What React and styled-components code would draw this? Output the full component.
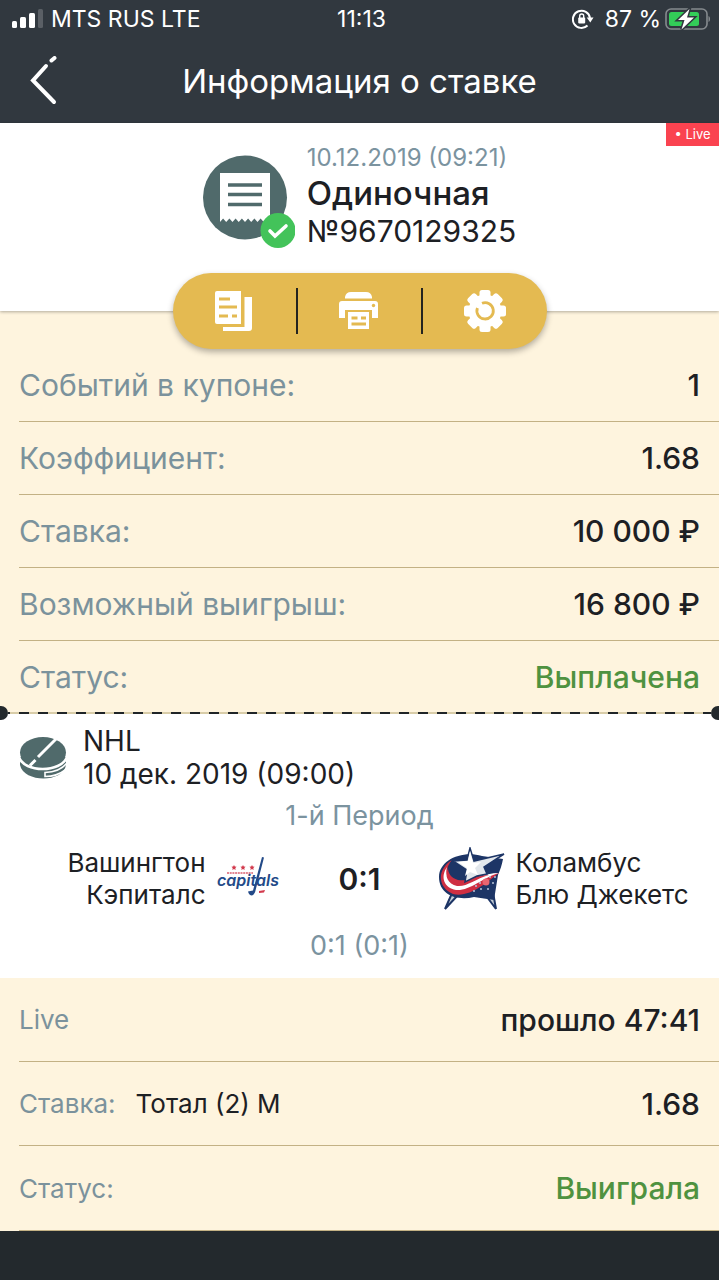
import React from 'react'
import styled, { createGlobalStyle } from 'styled-components'

const GlobalStyle = createGlobalStyle`
  * {
    box-sizing: border-box;
  }
  body {
    margin: 0;
    background: #23292d;
    font-family: Inter, "Open Sans", sans-serif;
    color: #1d2024;
  }
  h1, h2, p, dl, dt, dd {
    margin: 0;
    font-weight: 400;
  }
  button {
    border: 0;
    padding: 0;
    background: none;
    cursor: pointer;
  }
  svg {
    display: block;
    flex-shrink: 0;
  }
`;

const TopBar = styled.header`
  background: #31383f;
  color: white;
`;

const StatusBar = styled.div`
  display: grid;
  grid-template-columns: 1fr auto 1fr;
  align-items: center;
  height: 38px;
  padding: 0 8px 0 12px;
  font-size: 23px;
`;

const StatusGroup = styled.div`
  display: flex;
  align-items: center;
  gap: ${(props) => props.$gap}px;
  justify-content: ${(props) => (props.$end ? 'flex-end' : 'flex-start')};
  white-space: nowrap;
`;

const NavBar = styled.div`
  display: grid;
  grid-template-columns: 88px 1fr 88px;
  align-items: center;
  height: 85px;
`;

const BackButton = styled.button`
  display: flex;
  align-items: center;
  height: 100%;
  padding-left: 28px;
  color: white;
`;

const Title = styled.h1`
  font-size: 33px;
  line-height: 40px;
  text-align: center;
`;

const Summary = styled.section`
  position: relative;
  display: flex;
  flex-direction: column;
  align-items: center;
  background: white;
  box-shadow: 0 1px 3px rgba(0, 0, 0, 0.3);
`;

const LiveBadge = styled.span`
  position: absolute;
  top: 0;
  right: 0;
  width: 53px;
  height: 23px;
  background: #fa4350;
  color: white;
  font-size: 13px;
  line-height: 23px;
  text-align: center;
`;

const Coupon = styled.div`
  display: flex;
  gap: 12px;
  height: 150px;
  padding-top: 20px;
`;

const CouponIcon = styled.div`
  padding-top: 12px;
`;

const CouponDate = styled.p`
  font-size: 24px;
  line-height: 30px;
  color: #7b939f;
`;

const CouponType = styled.h2`
  font-size: 33px;
  font-weight: 500;
  line-height: 40px;
`;

const CouponNumber = styled.p`
  font-size: 30px;
  line-height: 36px;
`;

const Actions = styled.div`
  display: flex;
  align-items: center;
  width: 374px;
  height: 76px;
  margin-bottom: -38px;
  border-radius: 38px;
  background: #e4ba51;
  box-shadow: 0 3px 6px rgba(0, 0, 0, 0.3);
`;

const ActionButton = styled.button`
  flex: 1;
  display: flex;
  justify-content: center;
  color: white;

  & + & {
    border-left: 2px solid #24241f;
  }
`;

const Details = styled.dl`
  padding: ${(props) => props.$top || 0}px 0 0 19px;
  background: #fef4de;
`;

const Row = styled.div`
  display: flex;
  align-items: center;
  justify-content: space-between;
  height: ${(props) => (props.$tall ? 84 : 73)}px;
  padding-right: 19px;
  border-bottom: 1px solid #c3b184;

  &:last-child {
    height: ${(props) => (props.$tall ? 85 : 72)}px;
    border-bottom-width: ${(props) => (props.$tall ? 1 : 0)}px;
  }
`;

const Label = styled.dt`
  font-size: ${(props) => (props.$small ? 26 : 30)}px;
  color: #7b929c;
`;

const Value = styled.dd`
  margin-left: auto;
  font-size: 30px;
  font-weight: 500;
  color: ${(props) => (props.$good ? '#4f9240' : 'inherit')};
`;

const Pick = styled.dd`
  margin-left: 20px;
  font-size: 26px;
`;

const TearLine = styled.div`
  position: relative;
  display: flex;
  align-items: center;
  justify-content: space-between;
  height: 14px;
  margin: -7px 0;
  overflow: hidden;
`;

const TearDot = styled.span`
  width: 14px;
  height: 14px;
  margin: 0 -6px;
  border-radius: 50%;
  background: #23292d;
`;

const TearDashes = styled.span`
  flex: 1;
  height: 2px;
  margin: 0 6px;
  background: repeating-linear-gradient(to right, #1f2427 0 2px, #d9cda8 2px 11px, #1f2427 11px 19px);
`;

const Match = styled.section`
  height: 265px;
  padding-top: 12px;
  background: white;
`;

const League = styled.div`
  display: flex;
  align-items: center;
  gap: 16px;
  padding-left: 19px;
  font-size: 28px;
  line-height: 33px;
`;

const Note = styled.p`
  padding: 8px 0;
  font-size: 27px;
  line-height: 34px;
  text-align: center;
  color: #7b939f;
`;

const Teams = styled.div`
  display: grid;
  grid-template-columns: 1fr 156px 1fr;
  align-items: center;
  height: 80px;
  padding-bottom: 4px;
`;

const Team = styled.div`
  display: flex;
  align-items: center;
  justify-content: ${(props) => (props.$home ? 'flex-end' : 'flex-start')};
  gap: 10px;
  font-size: 26px;
  line-height: 32px;
  text-align: ${(props) => (props.$home ? 'right' : 'left')};
`;

const Score = styled.strong`
  font-size: 30px;
  font-weight: 600;
  text-align: center;
`;

const Signal = () => (
  <svg width="31" height="20" viewBox="0 0 31 20" fill="white" aria-hidden="true">
    <rect x="0" y="12" width="5" height="7" rx="1.5" />
    <rect x="8" y="8" width="6" height="11" rx="1.5" />
    <rect x="17" y="4" width="6" height="15" rx="1.5" />
    <rect x="26" y="0" width="5" height="19" rx="1.5" opacity="0.2" />
  </svg>
);

const RotationLock = () => (
  <svg width="22" height="20" viewBox="0 0 22 20" fill="none" aria-hidden="true">
    <path d="M15.500 16.500A8.600 8.600 0 1 1 18 9" stroke="white" strokeWidth="2" />
    <path d="M14.700 8.500h6.800l-3.200 5z" fill="white" />
    <rect x="6.200" y="8.600" width="7" height="5.800" rx="0.800" fill="white" />
    <path d="M7.700 9V7a2 2 0 0 1 4 0v2" stroke="white" strokeWidth="1.400" />
  </svg>
);

const Battery = () => (
  <svg width="46" height="24" viewBox="0 0 46 24" aria-hidden="true">
    <rect x="1" y="2" width="41" height="20" rx="5" fill="none" stroke="#858a8e" strokeWidth="1.6" />
    <rect x="4" y="5" width="30" height="14" rx="2.5" fill="#33cd58" />
    <path d="M43.5 9c2 .6 2 5.4 0 6z" fill="#858a8e" />
    <path
      d="M24.500 2L13 13h6.500l-3 9.500L29 10.500h-7z"
      fill="white"
      stroke="#31383f"
      strokeWidth="3"
      paintOrder="stroke"
    />
  </svg>
);

const BackArrow = () => (
  <svg width="30" height="50" viewBox="0 0 30 50" fill="none" stroke="currentColor" strokeWidth="4" strokeLinecap="round">
    <path d="M26 46L5 24.500 18 10" />
    <path d="M23.500 4.500L26.500 2" />
  </svg>
);

const CouponBadge = () => (
  <svg width="92" height="94" viewBox="0 0 92 94" aria-hidden="true">
    <circle cx="42" cy="42.500" r="42" fill="#506a6b" />
    <path
      d="M17 18h50v49l-3.200-3.500-3.100 3.500-3.100-3.500-3.100 3.500-3.100-3.500-3.200 3.500-3.100-3.500-3.100 3.500-3.100-3.500-3.200 3.500-3.100-3.500-3.100 3.500-3.100-3.500-3.200 3.500-3.100-3.500-3.100 3.500z"
      fill="white"
    />
    <path d="M25 30h34M25 39.500h34M25 49.500h34" stroke="#506a6b" strokeWidth="3.400" />
    <circle cx="75" cy="75.500" r="17.500" fill="#43c35a" />
    <path d="M67 76l5 5 11-10" fill="none" stroke="white" strokeWidth="3.600" strokeLinecap="round" />
  </svg>
);

const CopyIcon = () => (
  <svg width="38" height="46" viewBox="0 0 38 46" fill="none" aria-hidden="true">
    <path d="M0 5a2 2 0 0 1 2-2h24v33H2a2 2 0 0 1-2-2z" fill="white" />
    <path d="M29.500 9h7.500v31a3 3 0 0 1-3 3H8v-4h21.500z" fill="white" />
    <path d="M4 11h11M4 19h18M4 28h9M17 28h5" stroke="#e4ba51" strokeWidth="3" />
  </svg>
);

const PrinterIcon = () => (
  <svg width="40" height="46" viewBox="0 0 40 46" fill="none" aria-hidden="true">
    <path d="M6 10.500V9q1-5 6-5h15q5 0 6 5v1.500z" fill="white" />
    <path d="M3 13h33q3 0 3 3v14h-6v-8H6v8H0V16q0-3 3-3z" fill="white" />
    <circle cx="34.500" cy="17.500" r="1.700" fill="#e4ba51" />
    <rect x="9" y="24" width="21" height="17" fill="white" />
    <path d="M12.500 30h6M22 30h5M12.500 36h14.500" stroke="#e4ba51" strokeWidth="3" />
  </svg>
);

const GearIcon = () => (
  <svg width="42" height="46" viewBox="0 0 42 46" fill="none" aria-hidden="true">
    {[0, 45, 90, 135].map((angle) => (
      <rect key={angle} x="15.500" y="2" width="11" height="42" rx="2.500" fill="white" transform={`rotate(${angle} 21 23)`} />
    ))}
    <circle cx="21" cy="23" r="16.500" fill="white" />
    <path d="M18 15.200A8.200 8.200 0 1 1 13.400 20" stroke="#e4ba51" strokeWidth="2.800" />
  </svg>
);

const Puck = () => (
  <svg width="48" height="46" viewBox="0 0 48 46" aria-hidden="true">
    <path d="M1 22v8c4 18 43 18 46 0v-8z" fill="#506a6b" />
    <ellipse cx="24" cy="17.500" rx="23" ry="15.500" fill="#506a6b" />
    <path d="M37 4L19 22M16.500 25L11 30.500" stroke="white" strokeWidth="3" />
    <path d="M0 22c5 16 42 16 48 0" fill="none" stroke="white" strokeWidth="2.600" />
    <path d="M48 28q-7 9-22 9.500v4q12 0 21-7" fill="none" stroke="white" strokeWidth="1.600" />
  </svg>
);

const CapitalsLogo = () => (
  <svg width="66" height="44" viewBox="0 0 66 44" aria-label="Capitals">
    <g fill="#d2394c">
      <path d="M18 8l.8 1.600 1.800.2-1.300 1.300.3 1.900-1.600-.9-1.600.9.3-1.900-1.300-1.300 1.800-.2z" />
      <path d="M27 8l.8 1.600 1.800.2-1.300 1.300.3 1.900-1.600-.9-1.600.9.3-1.900-1.300-1.300 1.800-.2z" />
      <path d="M36 8l.8 1.600 1.800.2-1.300 1.300.3 1.900-1.600-.9-1.600.9.3-1.900-1.300-1.300 1.800-.2z" />
      <path d="M43 34l6-1-1 2.500-5 .5z" />
    </g>
    <path d="M11 16h26" stroke="#d2394c" strokeWidth="1.600" strokeDasharray="2 .7" opacity="0.8" />
    <text x="1" y="29" fontSize="16" fontWeight="600" fontStyle="italic" fill="#234a88">capitals</text>
    <path d="M46 0l2 .5-8 31q-1 6-4 7-3 0-4-4l5-1z" fill="#234a88" />
  </svg>
);

const BlueJacketsLogo = () => (
  <svg width="68" height="64" viewBox="0 0 68 64" aria-label="Blue Jackets">
    <path d="M15 44L7 62l13-14M46 46l12 16-4-22" fill="#c2ccd6" stroke="#1d3566" strokeWidth="2" />
    <path d="M44 9C24 3 1 13 1 30c0 18 18 24 35 20l20 3 4-25c2-5 4-10 5-16z" fill="#1d3566" />
    <path d="M14 13C-2 23 0 41 15 47c17 4 34-12 46-21-14 0-24 13-40 11C7 35 6 22 14 13z" fill="#cf2f42" />
    <path d="M9 20C2 30 6 41 18 43c14 1 26-12 43-17-17 0-27 10-41 8C9 32 7 27 9 20z" fill="white" />
    <path d="M10 21c-4 8 0 16 9 18 10 1 18-7 32-11-14 0-20 7-31 5-7-2-10-7-10-12z" fill="#cf2f42" />
    <path
      d="M32 1l4 13L66 7 46 20l3 7-10 2-12 6 2-12-14-9 14-1z"
      fill="#e2e7ec"
      stroke="#1d3566"
      strokeWidth="1.500"
    />
    <path d="M32 4l3 12 8-1-6 6 3 7-8-3-5 4 2-8-9-6 10-1z" fill="white" />
    <circle cx="48" cy="35" r="3.500" fill="#e96671" />
    <g fill="#b8c5d8">
      <circle cx="57" cy="30" r="1" />
      <circle cx="52" cy="30" r="1" />
      <circle cx="42" cy="36" r="1" />
      <circle cx="38" cy="39" r="1" />
      <circle cx="43" cy="42" r="1" />
      <circle cx="36" cy="44" r="1" />
      <circle cx="50" cy="42" r="1" />
      <circle cx="55" cy="36" r="1" />
    </g>
  </svg>
);

const bet = [
  { label: 'Событий в купоне:', value: '1' },
  { label: 'Коэффициент:', value: '1.68' },
  { label: 'Ставка:', value: '10 000 ₽' },
  { label: 'Возможный выигрыш:', value: '16 800 ₽' },
  { label: 'Статус:', value: 'Выплачена', good: true },
];

const outcome = [
  { label: 'Live', value: 'прошло 47:41' },
  { label: 'Ставка:', pick: 'Тотал (2) М', value: '1.68' },
  { label: 'Статус:', value: 'Выиграла', good: true },
];

const App = () => {
  return (
    <>
      <GlobalStyle />
      <TopBar>
        <StatusBar>
          <StatusGroup $gap={8}>
            <Signal />
            <span>MTS RUS LTE</span>
          </StatusGroup>
          <span>11:13</span>
          <StatusGroup $gap={4} $end>
            <RotationLock />
            <span>&nbsp;87 %</span>
            <Battery />
          </StatusGroup>
        </StatusBar>
        <NavBar>
          <BackButton aria-label="Назад">
            <BackArrow />
          </BackButton>
          <Title>Информация о ставке</Title>
        </NavBar>
      </TopBar>
      <main>
        <Summary>
          <LiveBadge>• Live</LiveBadge>
          <Coupon>
            <CouponIcon>
              <CouponBadge />
            </CouponIcon>
            <div>
              <CouponDate>10.12.2019 (09:21)</CouponDate>
              <CouponType>Одиночная</CouponType>
              <CouponNumber>№9670129325</CouponNumber>
            </div>
          </Coupon>
          <Actions>
            <ActionButton aria-label="Копировать">
              <CopyIcon />
            </ActionButton>
            <ActionButton aria-label="Печать">
              <PrinterIcon />
            </ActionButton>
            <ActionButton aria-label="Настройки">
              <GearIcon />
            </ActionButton>
          </Actions>
        </Summary>
        <Details $top={38}>
          {bet.map((row) => (
            <Row key={row.label}>
              <Label>{row.label}</Label>
              <Value $good={row.good}>{row.value}</Value>
            </Row>
          ))}
        </Details>
        <TearLine>
          <TearDot />
          <TearDashes />
          <TearDot />
        </TearLine>
        <Match>
          <League>
            <Puck />
            <div>
              <p>NHL</p>
              <p>10 дек. 2019 (09:00)</p>
            </div>
          </League>
          <Note>1-й Период</Note>
          <Teams>
            <Team $home>
              <span>Вашингтон<br />Кэпиталс</span>
              <CapitalsLogo />
            </Team>
            <Score>0:1</Score>
            <Team>
              <BlueJacketsLogo />
              <span>Коламбус<br />Блю Джекетс</span>
            </Team>
          </Teams>
          <Note>0:1 (0:1)</Note>
        </Match>
        <Details>
          {outcome.map((row) => (
            <Row key={row.label} $tall>
              <Label $small>{row.label}</Label>
              {row.pick && <Pick>{row.pick}</Pick>}
              <Value $good={row.good}>{row.value}</Value>
            </Row>
          ))}
        </Details>
      </main>
    </>
  )
}

export default App
